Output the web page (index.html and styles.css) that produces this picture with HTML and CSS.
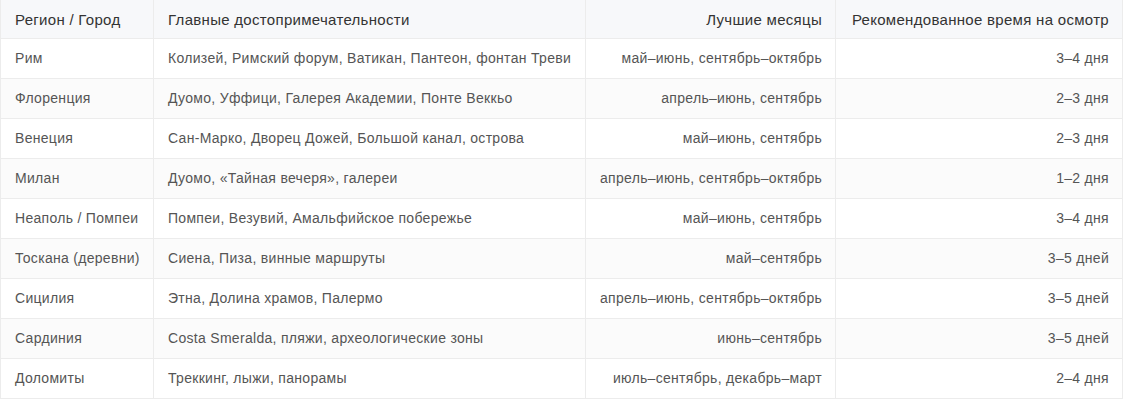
FILE: index.html
```html
<!DOCTYPE html>
<html lang="ru">
<head>
<meta charset="utf-8">
<title>Италия — регионы</title>
<link rel="stylesheet" href="styles.css">
</head>
<body>
<table class="data">
  <colgroup>
    <col class="c1"><col class="c2"><col class="c3"><col class="c4">
  </colgroup>
  <thead>
    <tr>
      <th>Регион / Город</th>
      <th>Главные достопримечательности</th>
      <th class="r">Лучшие месяцы</th>
      <th class="r">Рекомендованное время на осмотр</th>
    </tr>
  </thead>
  <tbody>
    <tr><td>Рим</td><td>Колизей, Римский форум, Ватикан, Пантеон, фонтан Треви</td><td class="r">май–июнь, сентябрь–октябрь</td><td class="r">3–4 дня</td></tr>
    <tr><td>Флоренция</td><td>Дуомо, Уффици, Галерея Академии, Понте Веккьо</td><td class="r">апрель–июнь, сентябрь</td><td class="r">2–3 дня</td></tr>
    <tr><td>Венеция</td><td>Сан-Марко, Дворец Дожей, Большой канал, острова</td><td class="r">май–июнь, сентябрь</td><td class="r">2–3 дня</td></tr>
    <tr><td>Милан</td><td>Дуомо, «Тайная вечеря», галереи</td><td class="r">апрель–июнь, сентябрь–октябрь</td><td class="r">1–2 дня</td></tr>
    <tr><td>Неаполь / Помпеи</td><td>Помпеи, Везувий, Амальфийское побережье</td><td class="r">май–июнь, сентябрь</td><td class="r">3–4 дня</td></tr>
    <tr><td>Тоскана (деревни)</td><td>Сиена, Пиза, винные маршруты</td><td class="r">май–сентябрь</td><td class="r">3–5 дней</td></tr>
    <tr><td>Сицилия</td><td>Этна, Долина храмов, Палермо</td><td class="r">апрель–июнь, сентябрь–октябрь</td><td class="r">3–5 дней</td></tr>
    <tr><td>Сардиния</td><td>Costa Smeralda, пляжи, археологические зоны</td><td class="r">июнь–сентябрь</td><td class="r">3–5 дней</td></tr>
    <tr><td>Доломиты</td><td>Треккинг, лыжи, панорамы</td><td class="r">июль–сентябрь, декабрь–март</td><td class="r">2–4 дня</td></tr>
  </tbody>
</table>
</body>
</html>
```
FILE: styles.css
```css
html, body {
  margin: 0;
  padding: 0;
  background: #ffffff;
}

body {
  font-family: "Liberation Sans", Arial, sans-serif;
  font-size: 14px;
  letter-spacing: 0.3px;
  color: #555555;
}

.data {
  border-collapse: collapse;
  table-layout: fixed;
  width: 1122px;
  margin-top: -1px;
}

.c1 { width: 153px; }
.c2 { width: 432px; }
.c3 { width: 250px; }
.c4 { width: 287px; }

.data th,
.data td {
  border: 1px solid #ececec;
  padding: 0 14px;
  text-align: left;
  white-space: nowrap;
  line-height: 17px;
}

.data th {
  height: 38px;
  font-size: 15px;
  font-weight: normal;
  color: #333333;
  background: #f7f8fa;
}

.data td {
  height: 39px;
}

.data tbody tr:nth-child(even) td {
  background: #fbfbfb;
}

.data .r {
  text-align: right;
  padding-right: 13px;
}
```
